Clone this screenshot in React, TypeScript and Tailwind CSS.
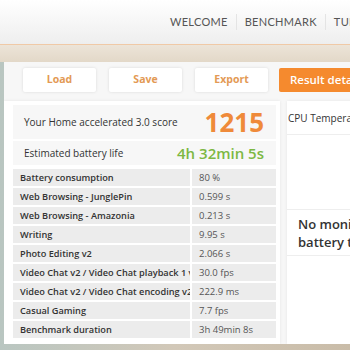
const rows: [string, string][] = [
  ["Battery consumption", "80 %"],
  ["Web Browsing - JunglePin", "0.599 s"],
  ["Web Browsing - Amazonia", "0.213 s"],
  ["Writing", "9.95 s"],
  ["Photo Editing v2", "2.066 s"],
  ["Video Chat v2 / Video Chat playback 1 v2", "30.0 fps"],
  ["Video Chat v2 / Video Chat encoding v2", "222.9 ms"],
  ["Casual Gaming", "7.7 fps"],
  ["Benchmark duration", "3h 49min 8s"],
];

function NavItem({ label, last }: { label: string; last?: boolean }) {
  return (
    <div className={`shrink-0 px-[8px] ${last ? "" : "border-r border-[#e4e4e4]"} whitespace-nowrap`}>
      {label}
    </div>
  );
}

function ActionButton({ label }: { label: string }) {
  return (
    <button className="shrink-0 w-[73px] h-[24px] bg-white rounded-[2px] shadow-[0_0_3px_rgba(0,0,0,0.12)] text-[10.5px] font-bold text-[#e39a55]">
      {label}
    </button>
  );
}

export default function App() {
  return (
    <div
      className="w-[350px] h-[350px] overflow-hidden flex flex-col bg-gradient-to-r from-[#b9c6c1] via-[#d2c8b8] to-[#c9bca8]"
      style={{ fontFamily: '"Open Sans", "Liberation Sans", sans-serif' }}
    >
      <header
        className="h-[44px] shrink-0 bg-gradient-to-b from-white to-[#eeeeee] flex items-center pl-[162px] text-[11px] text-[#555] tracking-[0.3px] overflow-hidden"
        style={{ fontFamily: 'Lato, "Liberation Sans", sans-serif' }}
      >
        <NavItem label="WELCOME" />
        <NavItem label="BENCHMARK" />
        <NavItem label="TUNE" last />
      </header>
      <div className="h-[18px] shrink-0 border-t border-[#f0c9a6] bg-gradient-to-b from-[#ece4d8] to-[#e3d8c8]" />
      <div className="ml-[4px] h-[282px] shrink-0 bg-[#f7f7f7] flex flex-col overflow-hidden">
        <div className="flex gap-[13px] pl-[19px] pt-[6px] h-[36px]">
          <ActionButton label="Load" />
          <ActionButton label="Save" />
          <ActionButton label="Export" />
          <button className="shrink-0 -ml-[2px] w-[90px] h-[24px] rounded-l-[2px] bg-[#f58a2e] text-white text-[11.5px] font-semibold text-left pl-[11px] whitespace-nowrap">
            Result details
          </button>
        </div>
        <div className="flex flex-1 gap-[7px] pt-[3px]">
          <div className="shrink-0 w-[276px] bg-white shadow-[0_0_3px_rgba(0,0,0,0.08)] pl-[9px] pr-[4px] pt-[4px]">
            <div className="h-[34px] bg-[#f7f7f7] flex items-center justify-between pl-[11px] pr-[12px]">
              <span className="text-[10px] text-[#333] whitespace-nowrap">Your Home accelerated 3.0 score</span>
              <span className="text-[26px] font-bold text-[#ef8a3a] leading-none">1215</span>
            </div>
            <div className="mt-[2px] h-[24px] bg-[#f7f7f7] flex items-center justify-between pl-[11px] pr-[12px]">
              <span className="text-[10px] text-[#333] whitespace-nowrap">Estimated battery life</span>
              <span className="text-[15px] font-semibold text-[#7db843] leading-none whitespace-nowrap">4h 32min 5s</span>
            </div>
            <div className="mt-[4px] flex flex-col gap-[2px]">
              {rows.map(([label, value]) => (
                <div key={label} className="flex gap-[2px] h-[17px]">
                  <div className="shrink-0 w-[177px] bg-[#ececec] pl-[7px] text-[9.2px] font-semibold text-[#333] leading-[17px] whitespace-nowrap overflow-hidden">
                    {label}
                  </div>
                  <div className="flex-1 bg-[#ececec] pl-[7px] text-[9.5px] text-[#555] leading-[17px] whitespace-nowrap overflow-hidden">
                    {value}
                  </div>
                </div>
              ))}
            </div>
          </div>
          <div className="shrink-0 w-[70px] bg-white shadow-[0_0_3px_rgba(0,0,0,0.08)] flex flex-col overflow-hidden">
            <div className="h-[34px] border-b border-[#eeeeee] flex items-center pl-[1px] pt-[2px] text-[10px] text-[#333] whitespace-nowrap">
              CPU Temperature
            </div>
            <div className="mt-[74px] h-[47px] border-y border-[#eeeeee] flex flex-col justify-center pl-[11px] text-[13px] font-semibold text-[#333] leading-[18px] whitespace-nowrap">
              <span>No monitoring</span>
              <span>battery temp</span>
            </div>
          </div>
        </div>
      </div>
    </div>
  );
}
